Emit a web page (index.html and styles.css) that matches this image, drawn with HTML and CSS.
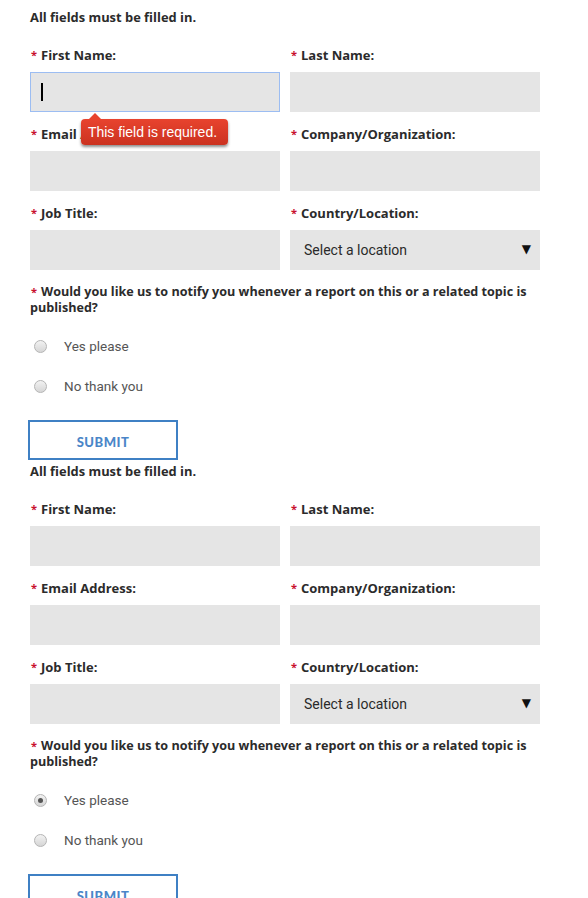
FILE: index.html
```html
<!DOCTYPE html>
<html>
<head>
<meta charset="utf-8">
<link rel="stylesheet" href="styles.css">
</head>
<body>
<div class="page">
  <form class="form">
    <p class="note">All fields must be filled in.</p>
    <div class="grid">
      <div class="field first">
        <label class="label"><span class="req">*</span>First Name:</label>
        <div class="input focus"><span class="caret"></span></div>
        <div class="tooltip">This field is required.</div>
      </div>
      <div class="field">
        <label class="label"><span class="req">*</span>Last Name:</label>
        <div class="input"></div>
      </div>
      <div class="field">
        <label class="label"><span class="req">*</span>Email Address:</label>
        <div class="input"></div>
      </div>
      <div class="field">
        <label class="label"><span class="req">*</span>Company/Organization:</label>
        <div class="input"></div>
      </div>
      <div class="field">
        <label class="label"><span class="req">*</span>Job Title:</label>
        <div class="input"></div>
      </div>
      <div class="field">
        <label class="label"><span class="req">*</span>Country/Location:</label>
        <div class="input select"><span>Select a location</span><span class="arrow">▼</span></div>
      </div>
    </div>
    <p class="question"><span class="req">*</span>Would you like us to notify you whenever a report on this or a related topic is published?</p>
    <div class="radios">
      <div class="radio-row"><span class="radio"></span><span class="radio-label">Yes please</span></div>
      <div class="radio-row"><span class="radio"></span><span class="radio-label">No thank you</span></div>
    </div>
    <button type="button" class="submit">SUBMIT</button>
  </form>

  <form class="form">
    <p class="note">All fields must be filled in.</p>
    <div class="grid">
      <div class="field">
        <label class="label"><span class="req">*</span>First Name:</label>
        <div class="input"></div>
      </div>
      <div class="field">
        <label class="label"><span class="req">*</span>Last Name:</label>
        <div class="input"></div>
      </div>
      <div class="field">
        <label class="label"><span class="req">*</span>Email Address:</label>
        <div class="input"></div>
      </div>
      <div class="field">
        <label class="label"><span class="req">*</span>Company/Organization:</label>
        <div class="input"></div>
      </div>
      <div class="field">
        <label class="label"><span class="req">*</span>Job Title:</label>
        <div class="input"></div>
      </div>
      <div class="field">
        <label class="label"><span class="req">*</span>Country/Location:</label>
        <div class="input select"><span>Select a location</span><span class="arrow">▼</span></div>
      </div>
    </div>
    <p class="question"><span class="req">*</span>Would you like us to notify you whenever a report on this or a related topic is published?</p>
    <div class="radios">
      <div class="radio-row"><span class="radio checked"></span><span class="radio-label">Yes please</span></div>
      <div class="radio-row"><span class="radio"></span><span class="radio-label">No thank you</span></div>
    </div>
    <button type="button" class="submit">SUBMIT</button>
  </form>
</div>
</body>
</html>
```

FILE: styles.css
```css
html, body {
  margin: 0;
  padding: 0;
  background: #fff;
}
.page {
  padding: 6px 0 0 30px;
  font-family: "Open Sans", "Liberation Sans", sans-serif;
  color: #2b2b2b;
}
.form {
  width: 510px;
  display: flex;
  flex-direction: column;
  align-items: flex-start;
}
.note {
  margin: 0;
  font-size: 12.9px;
  font-weight: 700;
  line-height: 22px;
  height: 22px;
}
.grid {
  margin-top: 18px;
  display: grid;
  grid-template-columns: 250px 250px;
  column-gap: 10px;
  row-gap: 13px;
  width: 510px;
}
.field {
  position: relative;
  display: flex;
  flex-direction: column;
}
.label {
  font-size: 13px;
  font-weight: 700;
  line-height: 18px;
  height: 18px;
  margin-bottom: 8px;
  white-space: nowrap;
}
.req {
  color: #c8102e;
  font-weight: 700;
  font-size: 11px;
  display: inline-block;
  vertical-align: top;
  width: 11px;
  padding-left: 1px;
  box-sizing: border-box;
}
.input {
  height: 40px;
  background: #e5e5e5;
  box-sizing: border-box;
  display: flex;
  align-items: center;
}
.input.focus {
  border: 1px solid #9cbdf2;
  padding-left: 10px;
}
.caret {
  width: 2px;
  height: 18px;
  background: #000;
}
.select {
  padding: 0 9px 0 14px;
  justify-content: space-between;
  font-family: Roboto, "Liberation Sans", sans-serif;
  font-size: 14px;
  color: #2a2a2a;
}
.arrow {
  font-family: "DejaVu Sans", sans-serif;
  font-size: 12px;
  color: #111;
  padding-bottom: 2px;
}
.tooltip {
  position: absolute;
  z-index: 5;
  left: 51px;
  top: 73px;
  width: 147px;
  height: 26px;
  box-sizing: border-box;
  padding-right: 4px;
  border-radius: 4px;
  background: linear-gradient(#e8432e, #cb3220);
  box-shadow: 0 2px 3px rgba(0, 0, 0, 0.45);
  color: #fff;
  font-family: "Liberation Sans", Arial, sans-serif;
  font-size: 14px;
  line-height: 26px;
  text-align: center;
  white-space: nowrap;
}
.tooltip::before {
  content: "";
  position: absolute;
  left: 7px;
  top: -6px;
  border-left: 7px solid transparent;
  border-right: 7px solid transparent;
  border-bottom: 7px solid #e8432e;
}
.question {
  margin: 14px 0 0;
  font-size: 12.6px;
  font-weight: 700;
  line-height: 16px;
  width: 512px;
}
.question .req {
  line-height: 16px;
}
.label .req {
  line-height: 18px;
}
.radios {
  margin-top: 10px;
  display: flex;
  flex-direction: column;
}
.radio-row {
  height: 40px;
  display: flex;
  align-items: center;
  padding-left: 4px;
}
.radio {
  width: 11px;
  height: 11px;
  border-radius: 50%;
  border: 1px solid #b5b5b5;
  background: linear-gradient(#f2f2f2, #d6d6d6);
  box-sizing: content-box;
  margin-right: 17px;
  position: relative;
}
.radio.checked::after {
  content: "";
  position: absolute;
  left: 3px;
  top: 3px;
  width: 5px;
  height: 5px;
  border-radius: 50%;
  background: #555;
}
.radio-label {
  font-family: Roboto, "Liberation Sans", sans-serif;
  font-size: 13.5px;
  color: #555;
}
.submit {
  margin: 14px 0 0 -2px;
  width: 150px;
  height: 40px;
  box-sizing: border-box;
  border: 2px solid #3f80c4;
  background: #fff;
  color: #4a86c8;
  font-family: Lato, "Liberation Sans", sans-serif;
  font-weight: 900;
  font-size: 13px;
  letter-spacing: 0.5px;
  padding: 3px 0 0;
}
```
